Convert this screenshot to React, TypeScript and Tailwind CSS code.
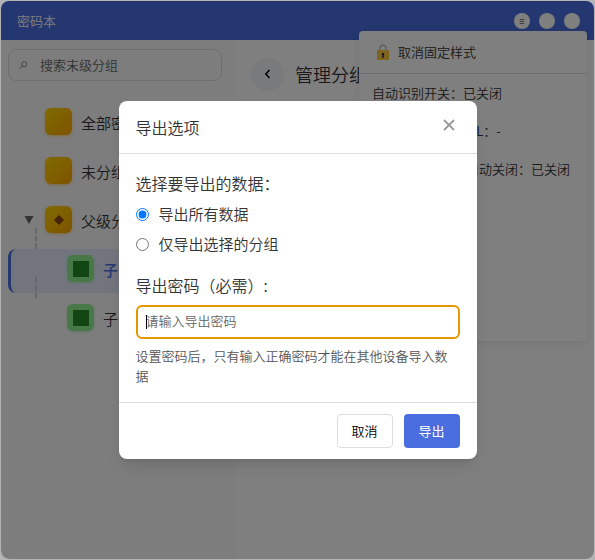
import { useState } from "react";
import clsx from "clsx";

type Group = {
    name: string;
    kind: "plain" | "parent" | "child";
    active?: boolean;
};

const GROUPS: Group[] = [
    { name: "全部密码", kind: "plain" },
    { name: "未分组", kind: "plain" },
    { name: "父级分组", kind: "parent" },
    { name: "子分组", kind: "child", active: true },
    { name: "子分组", kind: "child" },
];

const STATUS = ["自动识别开关：已关闭", "当前 识别 网站 URL：-", "自动填充 完成后自动关闭：已关闭"];

function TitleBar() {
    return (
        <header className="flex h-[39px] shrink-0 items-center bg-[#4a6ee0] pr-3.5 pl-4 text-white">
            <h1 className="flex-1 text-[13px] leading-5">密码本</h1>
            <div className="flex gap-[9px]">
                <button aria-label="菜单" className="flex size-4 items-center justify-center rounded-full bg-white">
                    <svg viewBox="0 0 16 16" className="size-4" stroke="#555" strokeWidth="0.8">
                        <path d="M5.8 6.5H10.2M5.8 8.5H10.2M5.8 10.5H10.2" />
                    </svg>
                </button>
                <button aria-label="最小化" className="size-4 rounded-full bg-white" />
                <button aria-label="关闭窗口" className="size-4 rounded-full bg-white" />
            </div>
        </header>
    );
}

function GroupRow({ group }: { group: Group }) {
    const child = group.kind === "child";
    return (
        <li className="relative">
            {child && <span className="absolute -top-[21px] left-[27px] z-10 h-[21px] border-l-2 border-dashed border-[#d0d0d0]" />}
            <a
                href="#"
                className={clsx(
                    "flex items-start rounded-lg border-l-3 pt-1.5 pb-2",
                    child ? "pl-14" : "pl-[13px]",
                    group.active ? "border-[#4a6ee0] bg-[#e4ebfb] font-medium text-[#4a6ee0]" : "border-transparent text-[#333]"
                )}
            >
                {!child && (
                    <span className="flex h-7 w-[21px] items-center">
                        {group.kind === "parent" && (
                            <svg viewBox="0 0 10 10" className="size-2.5" fill="#666">
                                <path d="M0.5 1H9.5L5 9Z" />
                            </svg>
                        )}
                    </span>
                )}
                <span
                    className={clsx(
                        "mr-[9px] flex size-[27px] shrink-0 items-center justify-center rounded-md shadow",
                        child ? "bg-[#90ee90] shadow-[#90ee90]/40" : "bg-linear-135 from-[#ffd700] to-[#ffa500] shadow-[#ffa500]/40"
                    )}
                >
                    {group.kind === "parent" && (
                        <svg viewBox="0 0 10 10" className="size-2.5" fill="#8b4513">
                            <path d="M5 0L10 5L5 10L0 5Z" />
                        </svg>
                    )}
                    {child && <span className="size-4 bg-[#228b22]" />}
                </span>
                <span className="text-[15px] leading-[30px] whitespace-nowrap">{group.name}</span>
            </a>
        </li>
    );
}

function Sidebar() {
    return (
        <aside className="w-[233px] shrink-0 bg-[#fafafa] pt-[9px] pr-3 pl-[7px]">
            <div className="flex h-8 items-center rounded-lg border border-[#ddd] bg-white/20 pl-2.5">
                <svg viewBox="0 0 10 10" className="mr-3 size-2.5" fill="none" stroke="#6b7a8d" strokeWidth="1">
                    <circle cx="5.8" cy="4.2" r="2.8" />
                    <path d="M3.7 6.3L1 9" />
                </svg>
                <input
                    type="search"
                    aria-label="搜索末级分组"
                    placeholder="搜索末级分组"
                    className="w-full min-w-0 bg-transparent text-[13px] leading-5 outline-none placeholder:text-[#666]"
                />
            </div>
            <ul className="mt-[21px] flex flex-col gap-[5px]">
                {GROUPS.map((group, i) => (
                    <GroupRow key={i} group={group} />
                ))}
            </ul>
        </aside>
    );
}

function StatusPanel() {
    return (
        <section className="absolute top-[30px] right-[7px] h-[310px] w-[228px] rounded-sm bg-white text-[13px] text-[#333] shadow-[0_2px_10px_rgba(0,0,0,0.1)]">
            <button className="flex h-[43px] w-full items-center gap-2 border-b border-[#ddd] pl-[17px]">
                <svg viewBox="0 0 14 16" className="h-4 w-3.5">
                    <path d="M4 7V4.2a3 3 0 0 1 6 0V7" fill="none" stroke="#b0b4b8" strokeWidth="1.2" />
                    <rect x="1" y="6" width="12" height="10" rx="1" fill="#ffc83d" />
                    <path d="M7 8.8a1.3 1.3 0 0 1 .8 2.3V14H6.2v-2.9A1.3 1.3 0 0 1 7 8.8Z" fill="#3b2a55" />
                </svg>
                取消固定样式
            </button>
            <ul className="flex flex-col gap-[18px] pt-[9px] pl-[13px] leading-5 whitespace-nowrap">
                {STATUS.map((line) => (
                    <li key={line}>{line}</li>
                ))}
            </ul>
        </section>
    );
}

function ExportDialog() {
    const [scope, setScope] = useState("all");
    const [password, setPassword] = useState("");

    return (
        <div role="dialog" aria-modal="true" aria-labelledby="export-title" className="w-full max-w-[358px] rounded-lg bg-white text-[#333] shadow-lg">
            <div className="flex h-[53px] items-center justify-between border-b border-[#ddd] pr-[21px] pl-[17px]">
                <h2 id="export-title" className="text-base">导出选项</h2>
                <button aria-label="关闭" className="pb-1">
                    <svg viewBox="0 0 14 14" className="size-3.5" fill="none" stroke="#999" strokeWidth="1.8">
                        <path d="M2 2L12 12M12 2L2 12" />
                    </svg>
                </button>
            </div>

            <div className="px-[17px] py-4">
                <fieldset>
                    <legend className="text-base leading-[26px]">选择要导出的数据：</legend>
                    <div className="mt-1.5 flex flex-col gap-1.5 text-[15px] leading-6">
                        <label className="flex items-center gap-2.5">
                            <input type="radio" name="scope" className="size-[13px]" checked={scope === "all"} onChange={() => setScope("all")} />
                            导出所有数据
                        </label>
                        <label className="flex items-center gap-2.5">
                            <input type="radio" name="scope" className="size-[13px]" checked={scope === "groups"} onChange={() => setScope("groups")} />
                            仅导出选择的分组
                        </label>
                    </div>
                </fieldset>

                <label htmlFor="export-password" className="mt-4 block text-base leading-[26px]">
                    导出密码（必需）:
                </label>
                <div className="relative mt-[7px]">
                    <input
                        id="export-password"
                        type="password"
                        autoFocus
                        placeholder="请输入导出密码"
                        value={password}
                        onChange={(e) => setPassword(e.target.value)}
                        className="block h-[34px] w-full rounded-md border-2 border-[#e59700] px-2 pb-1 text-[13px] caret-transparent outline-none placeholder:text-[#666]"
                    />
                    {/* caret */}
                    {!password && <span className="pointer-events-none absolute inset-y-2.5 left-2.5 w-px bg-black" />}
                </div>
                <p className="mt-[7px] text-[13px] leading-5 text-[#555]">设置密码后，只有输入正确密码才能在其他设备导入数据</p>
            </div>

            <div className="flex justify-end gap-[11px] border-t border-[#ddd] px-[17px] py-[11px] text-[13px]">
                <button className="h-[34px] w-14 rounded-sm border border-[#ddd] bg-white text-black">取消</button>
                <button className="h-[34px] w-14 rounded-sm bg-[#4a6ee0] font-normal text-white">导出</button>
            </div>
        </div>
    );
}

export default function App() {
    return (
        <div className="flex min-h-screen bg-[#b4b4b4] p-px font-['Noto_Sans_CJK_SC',sans-serif] font-[350]">
            <div className="relative flex flex-1 flex-col overflow-hidden rounded-lg bg-white">
                <TitleBar />
                <div className="flex flex-1">
                    <Sidebar />
                    <main className="flex-1">
                        <div className="flex h-[68px] items-center gap-[11px] pl-[17px]">
                            <button aria-label="返回" className="flex size-[33px] items-center justify-center rounded-full bg-[#f0f4f8]">
                                <svg viewBox="0 0 12 12" className="size-3" fill="none" stroke="#000" strokeWidth="1.5">
                                    <path d="M7.5 2L3.8 6L7.5 10" />
                                </svg>
                            </button>
                            <h2 className="text-lg text-[#333]">管理分组</h2>
                        </div>
                    </main>
                </div>
                <StatusPanel />
                <div className="absolute inset-0 z-20 flex items-center justify-center bg-black/50">
                    <ExportDialog />
                </div>
            </div>
        </div>
    );
}
